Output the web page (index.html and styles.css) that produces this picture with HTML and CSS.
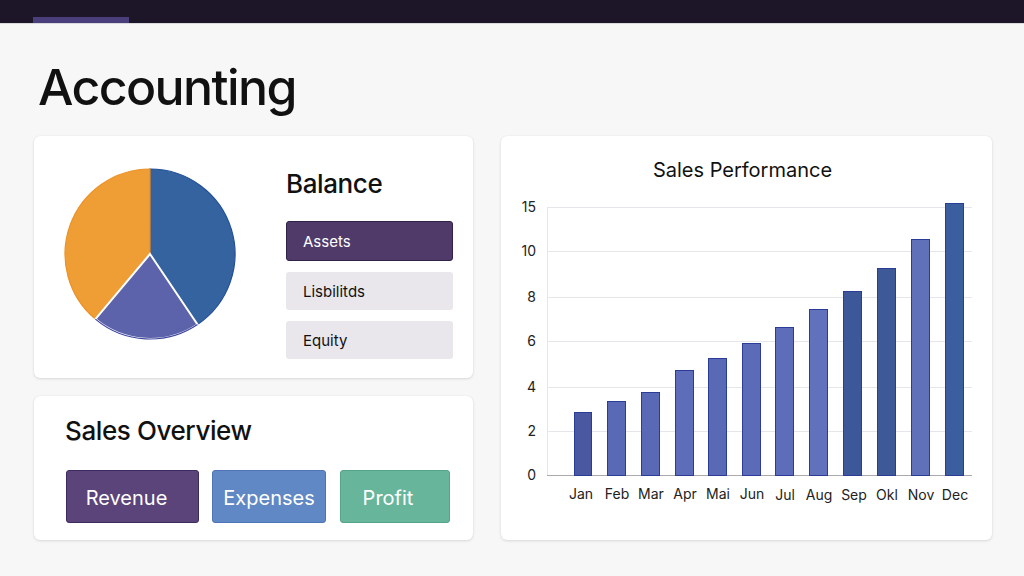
FILE: index.html
```html
<!DOCTYPE html>
<html lang="en">
<head>
<meta charset="utf-8">
<title>Accounting</title>
<link rel="stylesheet" href="styles.css">
</head>
<body>
<header class="topbar"><span class="tab"></span></header>
<main class="page">
  <h1 class="title">Accounting</h1>
  <div class="grid">
    <div class="left">
      <section class="card balance-card">
        <svg class="pie" width="172" height="172" viewBox="-1 -1 172 172">
          <path d="M85,85 L85,0 A85,85 0 0 1 132.5,155.5 Z" fill="#3463a0" stroke="#234f98" stroke-width="1.2"/>
          <path d="M85,85 L30.4,150.1 A85,85 0 0 1 85,0 Z" fill="#ef9d35" stroke="#eb9126" stroke-width="1.2"/>
          <path d="M85,85 L132.5,155.5 A85,85 0 0 1 30.4,150.1 Z" fill="#5c63aa" stroke="#ffffff" stroke-width="2"/>
          <path d="M132.5,155.5 A85,85 0 0 1 30.4,150.1" fill="none" stroke="#3e47a0" stroke-width="1.2"/>
        </svg>
        <div class="balance">
          <h2 class="card-heading">Balance</h2>
          <div class="list">
            <div class="item item-active">Assets</div>
            <div class="item">Lisbilitds</div>
            <div class="item">Equity</div>
          </div>
        </div>
      </section>
      <section class="card overview-card">
        <h2 class="card-heading">Sales Overview</h2>
        <div class="btns">
          <div class="btn btn-revenue">Revenue</div>
          <div class="btn btn-expenses">Expenses</div>
          <div class="btn btn-profit">Profit</div>
        </div>
      </section>
    </div>
    <section class="card perf-card">
      <h2 class="perf-title">Sales Performance</h2>
      <svg class="chart" width="491" height="330" viewBox="0 0 491 330">
        <g class="grid-lines" stroke="#e6e6ea" stroke-width="1">
          <line x1="46" y1="12.5" x2="471" y2="12.5"/>
          <line x1="46" y1="56.5" x2="471" y2="56.5"/>
          <line x1="46" y1="102.5" x2="471" y2="102.5"/>
          <line x1="46" y1="146.5" x2="471" y2="146.5"/>
          <line x1="46" y1="192.5" x2="471" y2="192.5"/>
          <line x1="46" y1="236.5" x2="471" y2="236.5"/>
          <line x1="46.5" y1="12" x2="46.5" y2="280"/>
        </g>
        <line x1="46" y1="280.5" x2="471" y2="280.5" stroke="#a9a9ae" stroke-width="1"/>
        <g class="ylabels" text-anchor="end">
          <text x="35" y="17">15</text>
          <text x="35" y="61">10</text>
          <text x="35" y="107">8</text>
          <text x="35" y="151">6</text>
          <text x="35" y="197">4</text>
          <text x="35" y="241">2</text>
          <text x="35" y="285">0</text>
        </g>
        <g class="bars" stroke="#2a3c96" stroke-width="1">
          <rect x="73.5" y="217.5" width="17" height="63" fill="#4a58a2"/>
          <rect x="106.5" y="206.5" width="18" height="74" fill="#5a69b6"/>
          <rect x="140.5" y="197.5" width="18" height="83" fill="#5a69b6"/>
          <rect x="174.5" y="175.5" width="18" height="105" fill="#5e6db9"/>
          <rect x="207.5" y="163.5" width="18" height="117" fill="#5a69b5"/>
          <rect x="241.5" y="148.5" width="18" height="132" fill="#5c6bb7"/>
          <rect x="274.5" y="132.5" width="18" height="148" fill="#5e6dba"/>
          <rect x="308.5" y="114.5" width="18" height="166" fill="#6171bb"/>
          <rect x="342.5" y="96.5" width="18" height="184" fill="#3c5898"/>
          <rect x="376.5" y="73.5" width="18" height="207" fill="#3d5998"/>
          <rect x="410.5" y="44.5" width="18" height="236" fill="#6171b9"/>
          <rect x="444.5" y="8.5" width="18" height="272" fill="#3b5e9e"/>
        </g>
        <g class="xlabels" text-anchor="middle">
          <text x="80" y="304">Jan</text>
          <text x="116" y="304">Feb</text>
          <text x="150" y="304">Mar</text>
          <text x="184" y="304">Apr</text>
          <text x="217" y="304">Mai</text>
          <text x="251" y="304">Jun</text>
          <text x="284" y="305">Jul</text>
          <text x="318" y="305">Aug</text>
          <text x="353" y="305">Sep</text>
          <text x="386" y="305">Okl</text>
          <text x="420" y="305">Nov</text>
          <text x="454" y="305">Dec</text>
        </g>
      </svg>
    </section>
  </div>
</main>
</body>
</html>
```

FILE: styles.css
```css
* { box-sizing: border-box; }
html, body { margin: 0; padding: 0; }
body {
  background: #f7f7f7;
  font-family: "Inter", "Noto Sans", sans-serif;
  color: #111;
  width: 1024px;
  height: 576px;
  overflow: hidden;
}
.topbar {
  height: 24px;
  background: #1d1628;
  display: flex;
  align-items: flex-end;
  padding-left: 33px;
  border-bottom: 1px solid #d9d9de;
}
.tab {
  width: 96px;
  height: 6px;
  background: #4a3f7a;
}
.page {
  padding: 0 0 0 34px;
}
.title {
  margin: 0;
  height: 112px;
  padding-top: 33px;
  padding-left: 4px;
  font-size: 50px;
  line-height: 60px;
  font-weight: 500;
  letter-spacing: -1.6px;
  color: #111;
}
.grid {
  display: grid;
  grid-template-columns: 439px 491px;
  column-gap: 28px;
}
.left {
  display: flex;
  flex-direction: column;
  gap: 18px;
}
.card {
  background: #fff;
  border-radius: 6px;
  box-shadow: 0 1px 3px rgba(0,0,0,0.12), 0 0 1px rgba(0,0,0,0.08);
}
.balance-card {
  height: 242px;
  display: flex;
  padding: 32px 0 0 30px;
}
.pie { display: block; }
.balance {
  margin-left: 50px;
  width: 167px;
}
.card-heading {
  margin: 0;
  font-size: 26px;
  font-weight: 500;
  line-height: 32px;
  letter-spacing: -0.4px;
  color: #111;
}
.list {
  margin-top: 20px;
  display: flex;
  flex-direction: column;
  gap: 11px;
}
.item {
  height: 38px;
  border-radius: 3px;
  background: #e9e7ec;
  font-size: 15px;
  line-height: 39px;
  padding-left: 17px;
  color: #111;
}
.item-active {
  height: 40px;
  line-height: 40px;
  margin-top: 1px;
  background: #4f3a69;
  border: 1px solid #2f2148;
  color: #fff;
  padding-left: 16px;
}
.overview-card {
  height: 144px;
  padding: 19px 0 0 31px;
}
.btns {
  display: flex;
  margin-top: 23px;
  margin-left: 1px;
}
.btn {
  height: 53px;
  border-radius: 3px;
  color: #fff;
  font-size: 20px;
  line-height: 54px;
  text-align: center;
  border: 1px solid rgba(0,0,0,0.15);
}
.btn-revenue { width: 133px; background: #5a4479; border-color: #3a2a5e; padding-right: 12px; }
.btn-expenses { width: 114px; margin-left: 13px; background: #6088c4; border-color: #4f74b6; }
.btn-profit { width: 110px; margin-left: 14px; background: #67b59a; border-color: #55a487; padding-right: 14px; }
.perf-card {
  height: 404px;
  padding-top: 20px;
}
.perf-title {
  margin: 0;
  text-align: center;
  font-size: 20px;
  font-weight: 400;
  line-height: 28px;
  padding-right: 8px;
  color: #111;
}
.chart {
  display: block;
  margin-top: 11px;
  font-family: "Inter", "Noto Sans", sans-serif;
}
.ylabels text { font-size: 14px; fill: #222; }
.xlabels text { font-size: 14px; fill: #222; }
```
